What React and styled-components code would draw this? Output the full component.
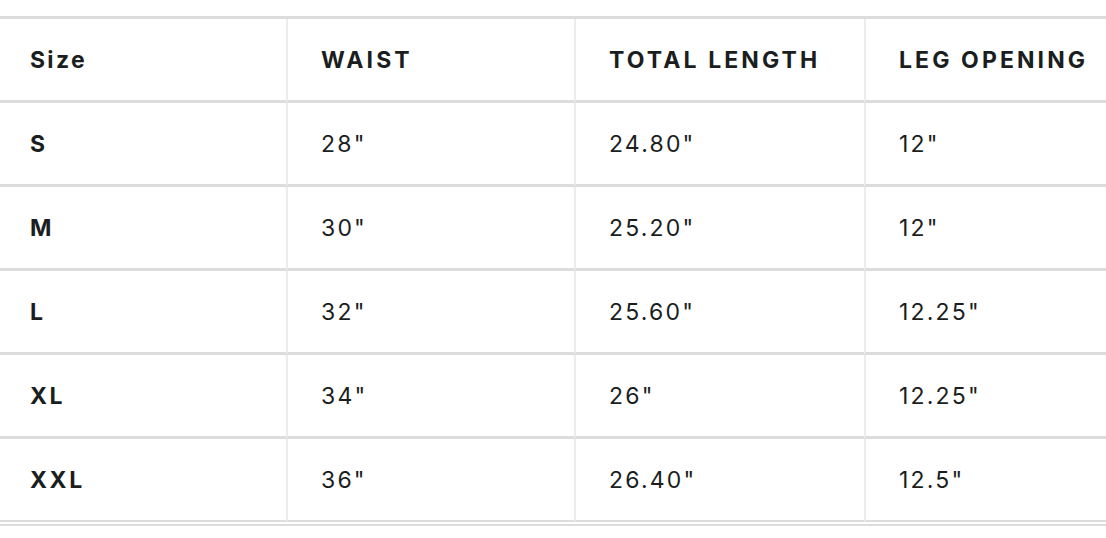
import React from 'react';
import styled, { createGlobalStyle } from 'styled-components';

const GlobalStyle = createGlobalStyle`
  html, body {
    margin: 0;
    padding: 0;
    background: #ffffff;
    overflow: hidden;
  }
  body {
    font-family: Inter, "Noto Sans", "Liberation Sans", sans-serif;
    color: #1b1e21;
    -webkit-font-smoothing: antialiased;
  }
`;

const Page = styled.div`
  padding-top: 16px;
  width: 1106px;
  overflow: hidden;
`;

const TableWrap = styled.div`
  width: 1160px;
  border-top: 3px solid #dcdcdc;
  border-bottom: 2px solid #dcdcdc;
  padding-bottom: 2px;
`;

const Table = styled.table`
  width: 100%;
  border-collapse: separate;
  border-spacing: 0;
  table-layout: fixed;
`;

const Cell = styled.td`
  height: 81px;
  padding: 0 0 0 ${(p) => (p.$first ? '30px' : '33px')};
  border-bottom: ${(p) => (p.$last ? '2px' : '3px')} solid #dcdcdc;
  border-left: ${(p) => (p.$first ? 'none' : '2px solid #ececec')};
  font-size: 23px;
  font-weight: ${(p) => (p.$bold ? 700 : 400)};
  letter-spacing: ${(p) => (p.$bold ? '2.6px' : '2.2px')};
  text-align: left;
  vertical-align: middle;
  white-space: nowrap;
`;

const HeadCell = styled(Cell).attrs({ as: 'th' })`
  font-weight: 700;
  letter-spacing: ${(p) => (p.$first ? '2.3px' : '3.1px')};
`;

const widths = [286, 288, 290, 296];
const headers = ['Size', 'WAIST', 'TOTAL LENGTH', 'LEG OPENING'];
const rows = [
  ['S', '28"', '24.80"', '12"'],
  ['M', '30"', '25.20"', '12"'],
  ['L', '32"', '25.60"', '12.25"'],
  ['XL', '34"', '26"', '12.25"'],
  ['XXL', '36"', '26.40"', '12.5"'],
];

const App = () => (
  <>
    <GlobalStyle />
    <Page>
      <TableWrap>
        <Table>
          <colgroup>
            {widths.map((w, i) => (
              <col key={i} style={{ width: w }} />
            ))}
          </colgroup>
          <thead>
            <tr>
              {headers.map((h, i) => (
                <HeadCell key={h} $first={i === 0}>
                  {h}
                </HeadCell>
              ))}
            </tr>
          </thead>
          <tbody>
            {rows.map((row, r) => (
              <tr key={row[0]}>
                {row.map((v, i) => (
                  <Cell
                    key={i}
                    $first={i === 0}
                    $bold={i === 0}
                    $last={r === rows.length - 1}
                  >
                    {v}
                  </Cell>
                ))}
              </tr>
            ))}
          </tbody>
        </Table>
      </TableWrap>
    </Page>
  </>
);

export default App;
